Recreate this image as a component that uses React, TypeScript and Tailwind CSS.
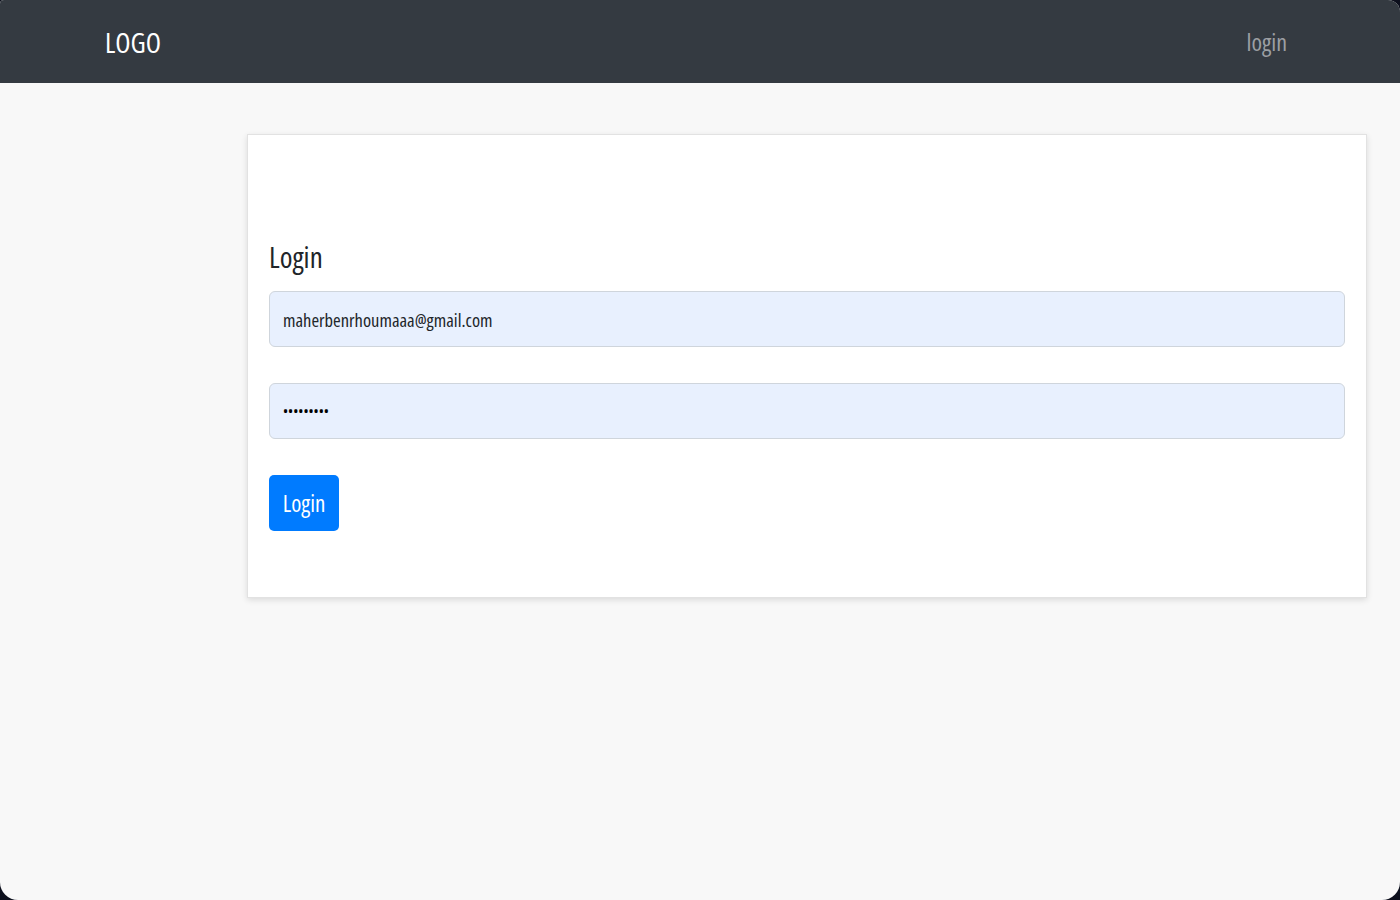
import { useState } from "react";

const font = "font-['Open_Sans',sans-serif] font-stretch-[75%]";

const App = () => {
  const [email, setEmail] = useState("maherbenrhoumaaa@gmail.com");
  const [password, setPassword] = useState("123456789");

  return (
    <div className="bg-[#0c0f1c]">
      <div
        className={`min-h-[900px] bg-[#f8f8f8] overflow-hidden rounded-tl-[4px] rounded-tr-[12px] rounded-b-[18px] ${font}`}
      >
        <nav className="h-[83px] bg-[#343a41] flex items-center justify-between pl-[105px] pr-[113px]">
          <a href="#" className="text-[28px] text-white leading-none">
            LOGO
          </a>
          <a href="#" className="text-[24px] text-[#9c9fa3] leading-none">
            login
          </a>
        </nav>
        <div className="flex justify-end pr-[33px] pt-[51px]">
          <div className="w-[1120px] bg-white border border-[#e2e2e2] shadow-[0_2px_6px_rgba(0,0,0,0.12)] px-[21px] pt-[100px] pb-[66px]">
            <h3 className="text-[29px] text-[#212529] leading-[44px] mb-[12px]">Login</h3>
            <form className="flex flex-col gap-[36px]" onSubmit={(e) => e.preventDefault()}>
              <input
                type="email"
                value={email}
                onChange={(e) => setEmail(e.target.value)}
                className="h-[56px] w-full rounded-[6px] border border-[#cfd5dc] bg-[#e8f0fe] px-[13px] text-[18.5px] text-[#212529] outline-none"
              />
              <input
                type="password"
                value={password}
                onChange={(e) => setPassword(e.target.value)}
                className="h-[56px] w-full rounded-[6px] border border-[#cfd5dc] bg-[#e8f0fe] px-[13px] text-[13.5px] text-black outline-none"
              />
              <div>
                <button
                  type="submit"
                  className="h-[56px] w-[70px] rounded-[5px] bg-[#007bff] text-white text-[23px] leading-none"
                >
                  Login
                </button>
              </div>
            </form>
          </div>
        </div>
      </div>
    </div>
  );
};

export default App;
